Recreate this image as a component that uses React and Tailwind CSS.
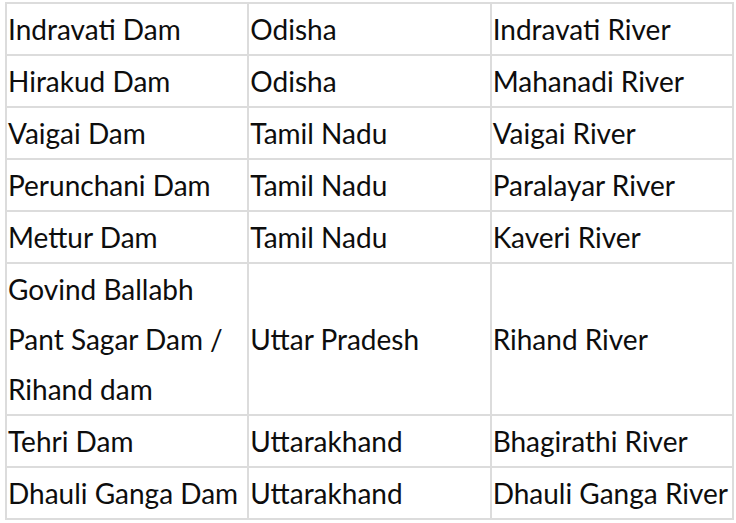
import React from "react";

const rows = [
  ["Indravati Dam", "Odisha", "Indravati River"],
  ["Hirakud Dam", "Odisha", "Mahanadi River"],
  ["Vaigai Dam", "Tamil Nadu", "Vaigai River"],
  ["Perunchani Dam", "Tamil Nadu", "Paralayar River"],
  ["Mettur Dam", "Tamil Nadu", "Kaveri River"],
  ["Govind Ballabh Pant Sagar Dam / Rihand dam", "Uttar Pradesh", "Rihand River"],
  ["Tehri Dam", "Uttarakhand", "Bhagirathi River"],
  ["Dhauli Ganga Dam", "Uttarakhand", "Dhauli Ganga River"],
];

const App = () => {
  return (
    <div className="w-[736px] h-[523px] bg-white pl-[5px] pt-[2px] overflow-hidden">
      <table
        className="w-[729px] table-fixed border-collapse text-[#0d0d0d] text-[28px] leading-[50px]"
        style={{ fontFamily: "Lato, 'Open Sans', sans-serif" }}
      >
        <tbody>
          {rows.map((row, i) => (
            <tr key={i}>
              {row.map((cell, j) => (
                <td
                  key={j}
                  className="border-2 border-[#dcdcdc] px-px py-0 align-middle"
                >
                  {cell}
                </td>
              ))}
            </tr>
          ))}
        </tbody>
      </table>
    </div>
  );
};

export default App;
